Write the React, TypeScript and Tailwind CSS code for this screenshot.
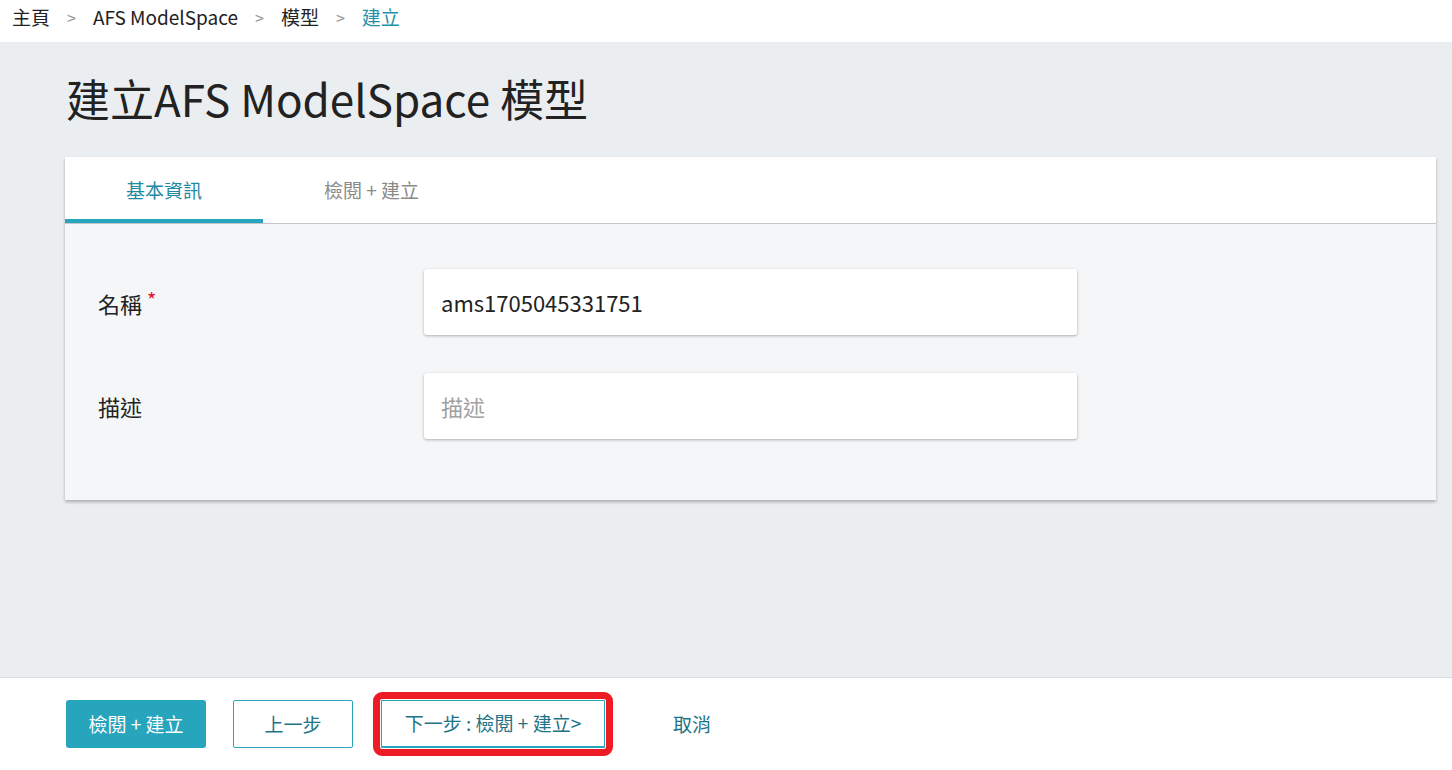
export default function App() {
  const font = { fontFamily: '"Noto Sans CJK TC", "Noto Sans", sans-serif' };

  return (
    <div className="w-[1452px] h-[770px] flex flex-col bg-[#ebeef1] text-[#222]" style={font}>
      {/* Breadcrumb */}
      <nav className="h-[42px] bg-white flex items-start pt-[5px] pl-[12px] text-[19px] leading-[24px]">
        <span className="text-[#222]">主頁</span>
        <span className="text-[#999] text-[16px] mx-[17px]">&gt;</span>
        <span className="text-[#222]">AFS ModelSpace</span>
        <span className="text-[#999] text-[16px] mx-[17px]">&gt;</span>
        <span className="text-[#222]">模型</span>
        <span className="text-[#999] text-[16px] mx-[17px]">&gt;</span>
        <span className="text-[#2591a8]">建立</span>
      </nav>

      {/* Main */}
      <main className="flex-1 pl-[65px] pr-[16px] pt-[30px]">
        <h1 className="text-[44px] leading-[52px] text-[#222] pl-[1px]">建立AFS ModelSpace 模型</h1>

        <div className="mt-[33px] shadow-[0_2px_3px_rgba(0,0,0,0.28)]">
          {/* Tabs */}
          <div className="h-[67px] bg-white flex border-b border-[#c4c6c9]">
            <button className="relative px-[61px] text-[19px] text-[#1f8aa3]">
              基本資訊
              <span className="absolute left-0 right-0 bottom-0 h-[4px] bg-[#27a5bd]" />
            </button>
            <button className="px-[61px] text-[19px] text-[#8a8a8a]">檢閱 + 建立</button>
          </div>

          {/* Form */}
          <div className="bg-[#f5f6f8] pt-[45px] pb-[61px] pl-[33px] flex flex-col gap-[38px]">
            <div className="flex items-center">
              <label className="w-[326px] text-[22px] text-[#222]">
                名稱<span className="text-[#e0102a] text-[20px] align-[5px] ml-[5px]">*</span>
              </label>
              <div className="w-[653px] h-[66px] bg-white rounded-[3px] shadow-[0_1px_3px_rgba(0,0,0,0.3)] flex items-center px-[17px] text-[22px] text-[#222]">
                ams1705045331751
              </div>
            </div>
            <div className="flex items-center">
              <label className="w-[326px] text-[22px] text-[#222]">描述</label>
              <div className="w-[653px] h-[66px] bg-white rounded-[3px] shadow-[0_1px_3px_rgba(0,0,0,0.3)] flex items-center px-[17px] text-[22px] text-[#a0a0a0]">
                描述
              </div>
            </div>
          </div>
        </div>
      </main>

      {/* Footer */}
      <footer className="h-[93px] bg-white border-t border-[#d9dce0] flex items-start pt-[22px] pl-[66px] gap-[27px] text-[19px]">
        <button className="w-[140px] h-[48px] rounded-[3px] bg-[#27a5bd] text-white">檢閱 + 建立</button>
        <button className="w-[120px] h-[48px] rounded-[2px] border border-[#27a5bd] text-[#1e7487]">上一步</button>
        <button className="w-[224px] h-[48px] ml-[1px] rounded-[1px] border border-[#27a5bd] border-b-2 text-[#1e7487] outline-[7px] outline-solid outline-[#ed1c24] outline-offset-[1px]">
          下一步 : 檢閱 + 建立&gt;
        </button>
        <button className="w-[120px] h-[48px] text-[#1e7487]">取消</button>
      </footer>
    </div>
  );
}
